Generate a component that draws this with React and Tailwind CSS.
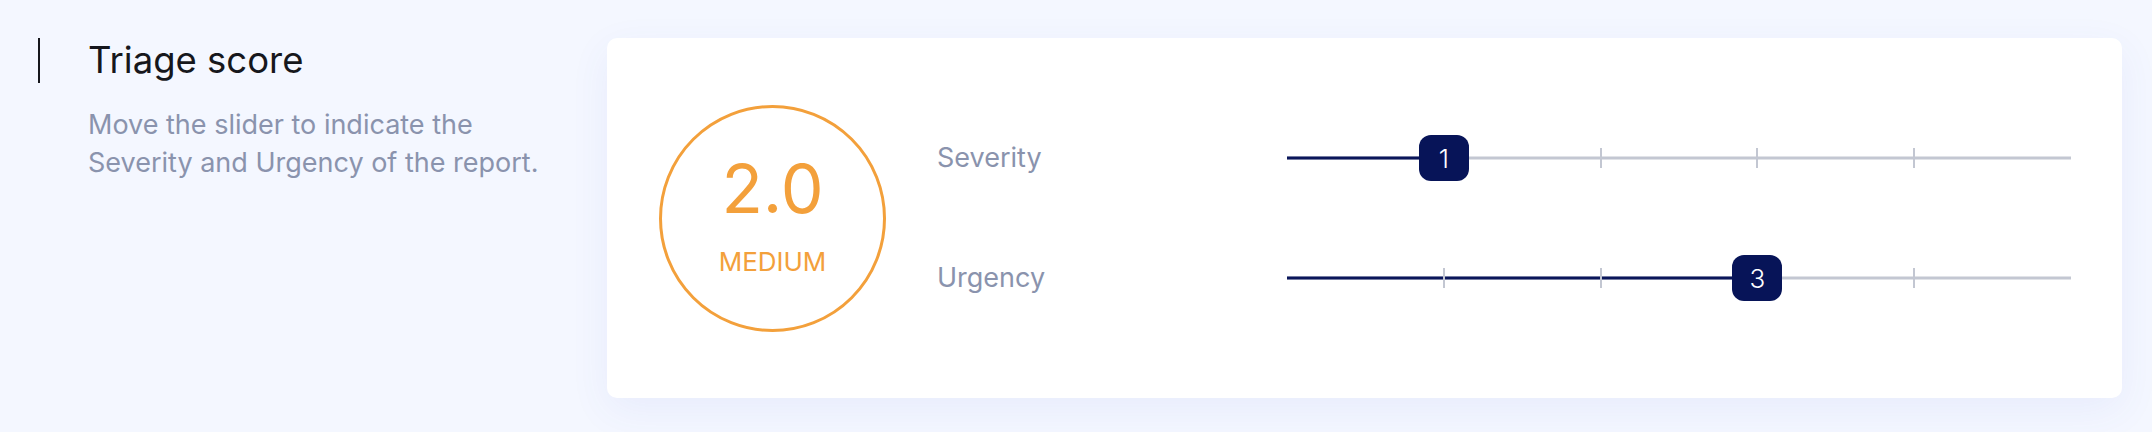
import { useState } from 'react';

const MAX = 5;

function Slider({ value }) {
    const pct = (value / MAX) * 100;
    const ticks = [1, 2, 3, 4];
    return (
        <div className="relative h-12 w-full">
            <div className="absolute left-0 right-0 top-1/2 h-[3px] -translate-y-1/2 bg-[#c3c7d2]" />
            <div className="absolute left-0 top-1/2 h-[3px] -translate-y-1/2 bg-[#0a165a]" style={{ width: `${pct}%` }} />
            {ticks.map((t) => (
                <div
                    key={t}
                    className="absolute top-1/2 h-5 w-[2px] -translate-x-1/2 -translate-y-1/2 bg-[#c3c7d2]"
                    style={{ left: `${(t / MAX) * 100}%` }}
                />
            ))}
            <div
                className="absolute top-1/2 flex h-[46px] w-[50px] -translate-x-1/2 -translate-y-1/2 items-center justify-center rounded-[12px] bg-[#071458] text-[26px] font-light text-white"
                style={{ left: `${pct}%` }}
            >
                {value}
            </div>
        </div>
    );
}

function App() {
    const [severity] = useState(1);
    const [urgency] = useState(3);

    return (
        <div className="flex h-[432px] w-full bg-[#f4f7ff] pl-[38px] pr-[30px] pt-[38px] font-['Inter',sans-serif]">
            <div className="w-[569px] shrink-0">
                <div className="border-l-2 border-[#16171c] pl-[48px]">
                    <h2 className="text-[36.5px] leading-[45px] text-[#16171c]">Triage score</h2>
                </div>
                <p className="mt-[23px] pl-[50px] text-[27px] leading-[38px] text-[#8a93ad]">
                    Move the slider to indicate the<br />Severity and Urgency of the report.
                </p>
            </div>

            <div className="flex h-[360px] flex-1 items-center rounded-[10px] bg-white pl-[52px] pr-[51px] shadow-[0_12px_40px_rgba(70,90,210,0.07)]">
                <div className="flex h-[227px] w-[227px] shrink-0 flex-col items-center justify-center rounded-full border-[3px] border-[#f3a03b] pb-[6px] text-[#f3a03b]">
                    <div className="text-[68px] leading-[70px]">2.0</div>
                    <div className="mt-[24px] text-[26px] leading-[30px]">MEDIUM</div>
                </div>

                <div className="ml-[51px] flex flex-1 flex-col gap-[72px]">
                    <div className="flex h-12 items-center">
                        <div className="w-[350px] shrink-0 text-[27px] text-[#8a93ad]">Severity</div>
                        <Slider value={severity} />
                    </div>
                    <div className="flex h-12 items-center">
                        <div className="w-[350px] shrink-0 text-[27px] text-[#8a93ad]">Urgency</div>
                        <Slider value={urgency} />
                    </div>
                </div>
            </div>
        </div>
    );
}

export default App;
